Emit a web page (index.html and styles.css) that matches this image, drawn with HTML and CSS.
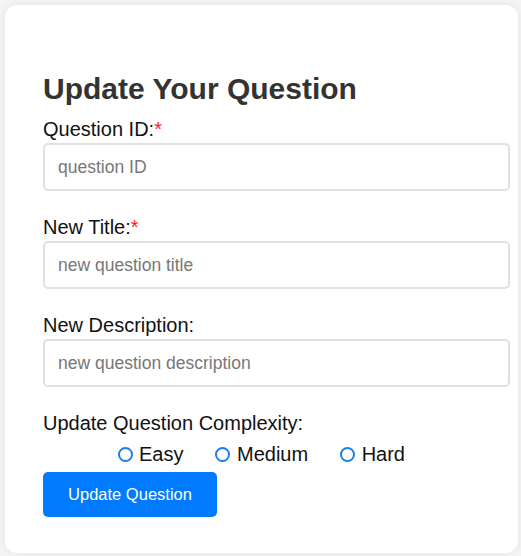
FILE: index.html
```html
<!DOCTYPE html>
<html lang="en">
<head>
<meta charset="utf-8">
<title>Update Your Question</title>
<link rel="stylesheet" href="styles.css">
</head>
<body>
<div class="card">
  <h2 class="title">Update Your Question</h2>
  <form class="form">
    <div class="field">
      <label class="label">Question ID:<span class="req">*</span></label>
      <input class="input" type="text" placeholder="question ID">
    </div>
    <div class="field">
      <label class="label">New Title:<span class="req">*</span></label>
      <input class="input" type="text" placeholder="new question title">
    </div>
    <div class="field">
      <label class="label">New Description:</label>
      <input class="input" type="text" placeholder="new question description">
    </div>
    <div class="field field-last">
      <label class="label">Update Question Complexity:</label>
      <div class="radios">
        <label class="radio"><input class="radio-input" type="radio" name="complexity"><span>Easy</span></label>
        <label class="radio"><input class="radio-input" type="radio" name="complexity"><span>Medium</span></label>
        <label class="radio"><input class="radio-input" type="radio" name="complexity"><span>Hard</span></label>
      </div>
    </div>
    <button class="btn" type="button">Update Question</button>
  </form>
</div>
</body>
</html>
```

FILE: styles.css
```css
* { margin: 0; }
html, body { height: 100%; }
body {
  background: #f4f4f4;
  font-family: "Liberation Sans", Arial, sans-serif;
  font-size: 20px;
  color: #111;
  padding: 5px 3.5px 3px 5px;
  box-sizing: border-box;
}
.card {
  background: #fff;
  border-radius: 12px;
  box-shadow: 0 0 8px rgba(0, 0, 0, 0.07);
  padding: 38px 38px 36px 38px;
}
.title {
  font-size: 30px;
  font-weight: bold;
  color: #333;
  line-height: 34.5px;
  margin: 29px 0 11px 0;
}
.form {
  display: flex;
  flex-direction: column;
  align-items: flex-start;
}
.field {
  display: flex;
  flex-direction: column;
  align-self: stretch;
  margin-bottom: 25px;
}
.field-last { margin-bottom: 6.5px; }
.label {
  display: block;
  line-height: 23px;
  margin-bottom: 2px;
  color: #111;
}
.req { color: #ff1a1a; }
.input {
  width: 100%;
  padding: 11px 13px;
  border: 2px solid #e0e0e0;
  border-radius: 5px;
  font-family: "Liberation Sans", Arial, sans-serif;
  font-size: 17.5px;
  line-height: 22px;
  color: #222;
  outline: none;
  background: #fff;
}
.input::placeholder { color: #777; }
.radios {
  display: flex;
  justify-content: center;
  gap: 32px;
  margin-top: 6px;
}
.radio {
  display: flex;
  align-items: center;
  gap: 6.5px;
  line-height: 23px;
  color: #111;
}
.radio-input {
  appearance: none;
  -webkit-appearance: none;
  width: 15px;
  height: 15px;
  box-sizing: border-box;
  border: 2px solid #1a7df0;
  border-radius: 50%;
  margin: 0;
  background: #fff;
}
.btn {
  background: #007bff;
  color: #fff;
  border: none;
  border-radius: 5px;
  font-family: "Liberation Sans", Arial, sans-serif;
  font-size: 16.5px;
  line-height: 19px;
  padding: 13px 25px;
  height: 45px;
  width: 174px;
  cursor: pointer;
}
```
